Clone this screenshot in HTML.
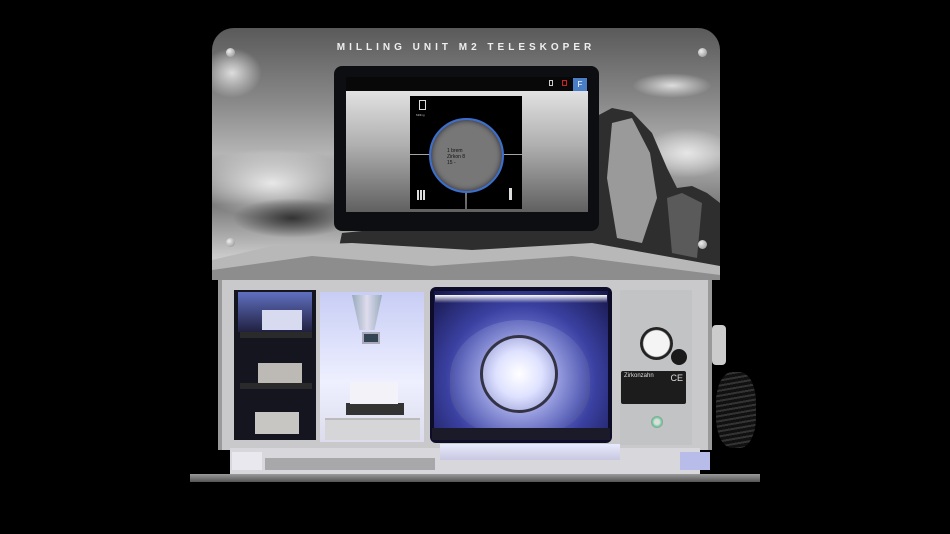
<!DOCTYPE html>
<html><head><meta charset="utf-8"><style>
*{margin:0;padding:0;box-sizing:border-box}
body{width:950px;height:534px;background:#000;position:relative;overflow:hidden;font-family:"Liberation Sans",sans-serif}
.a{position:absolute}
</style></head><body>
<!-- top panel -->
<div class="a" style="left:212px;top:28px;width:508px;height:252px;border-radius:22px 22px 0 0;overflow:hidden;background:linear-gradient(180deg,#5a5a5a 0%,#8a8a8a 30%,#b5b5b5 50%,#7a7a7a 70%,#c8c8c8 90%,#d8d8d8 100%)">
  <div class="a" style="left:-20px;top:120px;width:160px;height:70px;border-radius:50%;background:radial-gradient(#e8e8e8,rgba(200,200,200,0) 70%)"></div>
  <div class="a" style="left:20px;top:170px;width:120px;height:40px;border-radius:50%;background:radial-gradient(#333,rgba(60,60,60,0) 70%)"></div>
  <div class="a" style="left:-10px;top:20px;width:60px;height:50px;border-radius:50%;background:radial-gradient(#ddd,rgba(200,200,200,0) 70%)"></div>
  <div class="a" style="left:420px;top:45px;width:80px;height:25px;border-radius:50%;background:radial-gradient(#ddd,rgba(200,200,200,0) 70%)"></div>
  <div class="a" style="left:430px;top:100px;width:90px;height:50px;border-radius:50%;background:radial-gradient(#e6e6e6,rgba(200,200,200,0) 70%)"></div>
  <svg class="a" style="left:0;top:0" width="508" height="252">
    <polygon points="120,252 130,205 200,198 260,203 330,198 375,190 385,88 400,80 420,84 440,105 455,140 465,160 480,158 495,165 508,175 508,252" fill="#2e2e2e"/>
    <polygon points="400,95 420,90 438,125 445,170 430,215 405,210 395,150" fill="#9a9a9a"/>
    <polygon points="455,170 470,165 490,175 485,230 460,225" fill="#5a5a5a"/>
    <polygon points="0,232 60,218 140,215 260,222 380,215 508,238 508,252 0,252" fill="#b8b8b8"/>
    <polygon points="0,242 100,228 220,238 360,228 508,247 508,252 0,252" fill="#8d8d8d"/>
  </svg>
  <div class="a" style="left:0;top:14px;width:508px;text-align:center;color:#eee;font-size:10px;letter-spacing:4px;font-weight:bold">MILLING UNIT M2 TELESKOPER</div>
  <div class="a" style="left:14px;top:20px;width:9px;height:9px;border-radius:50%;background:radial-gradient(circle at 35% 35%,#eee,#888)"></div>
  <div class="a" style="left:486px;top:20px;width:9px;height:9px;border-radius:50%;background:radial-gradient(circle at 35% 35%,#eee,#888)"></div>
  <div class="a" style="left:14px;top:210px;width:9px;height:9px;border-radius:50%;background:radial-gradient(circle at 35% 35%,#eee,#888)"></div>
  <div class="a" style="left:486px;top:212px;width:9px;height:9px;border-radius:50%;background:radial-gradient(circle at 35% 35%,#eee,#888)"></div>
</div>
<!-- screen -->
<div class="a" style="left:334px;top:66px;width:265px;height:165px;background:#0c0e12;border-radius:8px"></div>
<div class="a" style="left:346px;top:77px;width:242px;height:135px;background:linear-gradient(180deg,#eee 0%,#b0b0b0 50%,#606060 100%)"></div>
<div class="a" style="left:346px;top:77px;width:242px;height:14px;background:#080808"></div>
<div class="a" style="left:573px;top:78px;width:14px;height:13px;background:#4a7fc8;color:#fff;font-size:8px;text-align:center;line-height:13px">F</div>
<div class="a" style="left:549px;top:80px;width:4px;height:6px;border:1px solid #ccc"></div>
<div class="a" style="left:562px;top:80px;width:5px;height:6px;border:1px solid #c22"></div>
<div class="a" style="left:410px;top:96px;width:112px;height:58px;background:#000"></div>
<div class="a" style="left:410px;top:155px;width:55px;height:54px;background:#000"></div>
<div class="a" style="left:467px;top:155px;width:55px;height:54px;background:#000"></div>
<div class="a" style="left:419px;top:100px;width:7px;height:10px;border:1px solid #ddd"></div>
<div class="a" style="left:416px;top:113px;color:#bbb;font-size:3px">Milling</div>
<div class="a" style="left:417px;top:190px;width:8px;height:10px;background:repeating-linear-gradient(90deg,#ddd 0 2px,transparent 2px 3px)"></div>
<div class="a" style="left:509px;top:188px;width:3px;height:12px;background:#ddd"></div>
<div class="a" style="left:429px;top:118px;width:75px;height:75px;border-radius:50%;background:#777;border:2px solid #3a6fd0;box-shadow:inset 0 0 6px #223"></div>
<div class="a" style="left:447px;top:148px;color:#111;font-size:5px;line-height:6px">1 brem<br>Zirkon 8<br>15 -</div>
<!-- machine body -->
<div class="a" style="left:218px;top:280px;width:494px;height:170px;background:#c9c9cc;border-left:4px solid #9a9a9a;border-right:4px solid #9a9a9a"></div>
<div class="a" style="left:234px;top:290px;width:82px;height:150px;background:#151520"></div>
<div class="a" style="left:238px;top:292px;width:74px;height:40px;background:linear-gradient(#6070c0,#202040)"></div>
<div class="a" style="left:262px;top:310px;width:40px;height:20px;background:#d8daf0"></div>
<div class="a" style="left:240px;top:332px;width:72px;height:6px;background:#2a2a2a"></div>
<div class="a" style="left:258px;top:363px;width:44px;height:20px;background:#bdbab5"></div>
<div class="a" style="left:240px;top:383px;width:72px;height:6px;background:#2a2a2a"></div>
<div class="a" style="left:255px;top:412px;width:44px;height:22px;background:#c8c6c2"></div>
<div class="a" style="left:320px;top:292px;width:104px;height:150px;background:linear-gradient(#c8cdf5,#eef0ff 60%,#dcdcec)"></div>
<div class="a" style="left:352px;top:295px;width:30px;height:35px;background:linear-gradient(90deg,#9ab,#dde,#9ab);clip-path:polygon(0 0,100% 0,75% 100%,25% 100%)"></div>
<div class="a" style="left:362px;top:332px;width:18px;height:12px;background:#345;border:2px solid #aab"></div>
<div class="a" style="left:346px;top:403px;width:58px;height:12px;background:#333"></div>
<div class="a" style="left:350px;top:382px;width:48px;height:22px;background:#f2f2f8"></div>
<div class="a" style="left:325px;top:418px;width:95px;height:22px;background:#d6d6d8;border-top:2px solid #bbb"></div>
<!-- chamber -->
<div class="a" style="left:430px;top:287px;width:182px;height:156px;background:#0d0d2a;border-radius:6px"></div>
<div class="a" style="left:434px;top:291px;width:174px;height:148px;background:radial-gradient(circle at 50% 60%,#c8ccf5 0%,#7880d8 30%,#3a40a0 60%,#16164a 100%)"></div>
<div class="a" style="left:435px;top:295px;width:172px;height:8px;background:linear-gradient(#fff,rgba(200,200,255,0))"></div>
<div class="a" style="left:450px;top:320px;width:140px;height:115px;border-radius:50% 50% 40% 40%;background:radial-gradient(circle,#e8eaff 0 22%,#9aa0e0 40%,#5a62b8 70%,#2a2a68 100%)"></div>
<div class="a" style="left:480px;top:335px;width:78px;height:78px;border-radius:50%;border:3px solid #334;background:radial-gradient(#fff 0,#dfe2ff 45%,#8890d0 100%)"></div>
<div class="a" style="left:432px;top:428px;width:178px;height:12px;background:#1a1a28"></div>
<!-- right panel -->
<div class="a" style="left:620px;top:290px;width:72px;height:155px;background:#c2c3c5"></div>
<div class="a" style="left:640px;top:327px;width:33px;height:33px;border-radius:50%;background:radial-gradient(#f4f4f4 55%,#222 60%)"></div>
<div class="a" style="left:671px;top:349px;width:16px;height:16px;border-radius:50%;background:#1a1a1a"></div>
<div class="a" style="left:621px;top:371px;width:65px;height:33px;background:#1c1c1c;border-radius:2px;color:#ddd;font-size:6px;padding:2px 3px">Zirkonzahn<span style="float:right;font-size:9px">CE</span></div>
<div class="a" style="left:651px;top:416px;width:12px;height:12px;border-radius:50%;background:radial-gradient(#ddd 30%,#6c9 55%,#999 70%)"></div>
<!-- hose -->
<div class="a" style="left:712px;top:325px;width:14px;height:40px;background:#ccc;border-radius:4px"></div>
<div class="a" style="left:716px;top:372px;width:40px;height:76px;border-radius:40%;background:repeating-linear-gradient(170deg,#111 0 3px,#333 3px 5px)"></div>
<!-- tray -->
<div class="a" style="left:230px;top:448px;width:470px;height:26px;background:#d8d8dc"></div>
<div class="a" style="left:440px;top:444px;width:180px;height:16px;background:linear-gradient(#e8eaff,#c8c8e0)"></div>
<div class="a" style="left:232px;top:452px;width:30px;height:18px;background:#e8e8ee"></div>
<div class="a" style="left:265px;top:458px;width:170px;height:12px;background:#a8a8aa"></div>
<div class="a" style="left:680px;top:452px;width:30px;height:18px;background:#b8bce8"></div>
<div class="a" style="left:190px;top:474px;width:570px;height:8px;background:linear-gradient(#9a9a9a,#555)"></div>
</body></html>
